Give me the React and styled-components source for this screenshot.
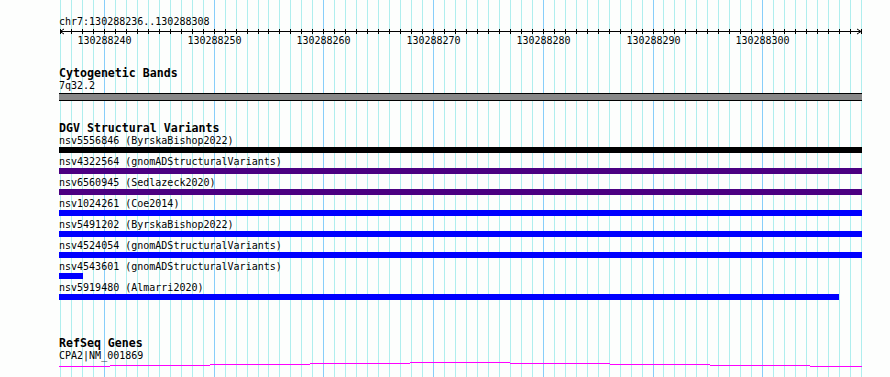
import React from 'react'
import styled, { createGlobalStyle } from 'styled-components'

const START = 130288236
const END = 130288309
const LEFT = 60
const RIGHT = 861
const PX = (RIGHT - LEFT) / (END - START)
const ORIGIN = 59
const TRACK_W = 803

const xOf = (pos) => Math.round(LEFT + (pos - START) * PX)

const GlobalStyle = createGlobalStyle`
    html, body {
        margin: 0;
        padding: 0;
        background: #fdfefd;
    }
    body {
        font-family: "DejaVu Sans Mono", "Liberation Mono", monospace;
        color: #000;
    }
`

const Page = styled.div`
    position: relative;
    width: 890px;
    height: 377px;
    overflow: hidden;
`

const GridLayer = styled.svg`
    position: absolute;
    left: 0;
    top: 0;
    display: block;
`

const Tracks = styled.div`
    position: relative;
    display: flex;
    flex-direction: column;
    padding-left: ${ORIGIN}px;
    width: ${TRACK_W}px;
`

const Location = styled.div`
    margin-top: 16px;
    font-size: 10px;
    line-height: 11px;
    white-space: pre;
`

const Ruler = styled.svg`
    display: block;
    font-family: "DejaVu Sans Mono", monospace;
    font-size: 10px;
`

const Section = styled.section`
    display: flex;
    flex-direction: column;
    margin-top: ${p => p.$gap}px;
`

const TrackTitle = styled.div`
    font-size: 11.6px;
    font-weight: bold;
    line-height: 13px;
    white-space: pre;
`

const Label = styled.div`
    font-size: 10px;
    line-height: 11px;
    white-space: pre;
`

const Band = styled.div`
    margin-top: 2px;
    height: 6px;
    background: #888888;
    border-top: 1px solid #000;
    border-bottom: 1px solid #000;
`

const Feature = styled.div`
    display: flex;
    flex-direction: column;
    & + & {
        margin-top: 3px;
    }
`

const Bar = styled.div`
    margin-top: 1px;
    height: 6px;
    background: ${p => p.$color};
`

const GeneLine = styled.svg`
    display: block;
`

const variants = [
    { id: 'nsv5556846', src: 'ByrskaBishop2022', color: '#000000', start: START - 50, end: END + 50 },
    { id: 'nsv4322564', src: 'gnomADStructuralVariants', color: '#4b0082', start: START - 50, end: END + 50 },
    { id: 'nsv6560945', src: 'Sedlazeck2020', color: '#4b0082', start: START - 50, end: END + 50 },
    { id: 'nsv1024261', src: 'Coe2014', color: '#0000ff', start: START - 50, end: END + 50 },
    { id: 'nsv5491202', src: 'ByrskaBishop2022', color: '#0000ff', start: START - 50, end: END + 50 },
    { id: 'nsv4524054', src: 'gnomADStructuralVariants', color: '#0000ff', start: START - 50, end: END + 50 },
    { id: 'nsv4543601', src: 'gnomADStructuralVariants', color: '#0000ff', start: START - 50, end: 130288238.1 },
    { id: 'nsv5919480', src: 'Almarri2020', color: '#0000ff', start: START - 50, end: 130288307 },
]

// gene line steps: [x0, x1, y]
const geneSteps = [
    [59, 110, 5], [110, 210, 4], [210, 310, 3], [310, 410, 2], [410, 510, 1],
    [510, 610, 2], [610, 710, 3], [710, 810, 4], [810, 862, 5],
]

const positions = Array.from({ length: END - START + 1 }, (_, i) => START + i)

const Grid = () => (
    <GridLayer width="890" height="377" shapeRendering="crispEdges">
        {positions.map(p => (
            <rect key={p} x={xOf(p)} y="0" width="1" height="377"
                fill={p % 10 === 0 ? '#87cefa' : '#afeeee'} />
        ))}
    </GridLayer>
)

const Scale = () => {
    const tip = RIGHT - ORIGIN
    return (
        <Ruler width={TRACK_W} height="20">
            <g shapeRendering="crispEdges">
                <rect x={LEFT - ORIGIN} y="4" width={RIGHT - LEFT} height="1" fill="#000" />
                {positions.map(p => (
                    <rect key={p} x={xOf(p) - ORIGIN} y="2" width="1" height="5" fill="#000" />
                ))}
            </g>
            <polyline points={`${LEFT - ORIGIN + 4},2 ${LEFT - ORIGIN},4.5 ${LEFT - ORIGIN + 4},7`}
                fill="none" stroke="#000" strokeWidth="1" />
            <polyline points={`${tip - 4},2 ${tip},4.5 ${tip - 4},7`}
                fill="none" stroke="#000" strokeWidth="1" />
            {positions.filter(p => p % 10 === 0).map(p => (
                <text key={p} x={xOf(p) - ORIGIN + 0.5} y="17" textAnchor="middle" fill="#000">{p}</text>
            ))}
        </Ruler>
    )
}

const VariantRow = ({ v }) => {
    const left = Math.max(ORIGIN, xOf(v.start))
    const right = Math.min(ORIGIN + TRACK_W, xOf(v.end))
    return (
        <Feature>
            <Label>{`${v.id} (${v.src})`}</Label>
            <Bar $color={v.color} style={{ marginLeft: left - ORIGIN, width: right - left }} />
        </Feature>
    )
}

const App = () => {
    return (
        <Page>
            <GlobalStyle />
            <Grid />
            <Tracks>
                <Location>chr7:130288236..130288308</Location>
                <Scale />

                <Section $gap={20}>
                    <TrackTitle>Cytogenetic Bands</TrackTitle>
                    <Label>7q32.2</Label>
                    <Band />
                </Section>

                <Section $gap={21}>
                    <TrackTitle>DGV Structural Variants</TrackTitle>
                    {variants.map(v => <VariantRow key={v.id} v={v} />)}
                </Section>

                <Section $gap={37}>
                    <TrackTitle>RefSeq Genes</TrackTitle>
                    <Label>CPA2|NM_001869</Label>
                    <GeneLine width={TRACK_W} height="8" shapeRendering="crispEdges">
                        {geneSteps.map(([a, b, y]) => (
                            <rect key={a} x={a - ORIGIN} y={y} width={b - a} height="1" fill="#ff00ff" />
                        ))}
                    </GeneLine>
                </Section>
            </Tracks>
        </Page>
    )
}

export default App
